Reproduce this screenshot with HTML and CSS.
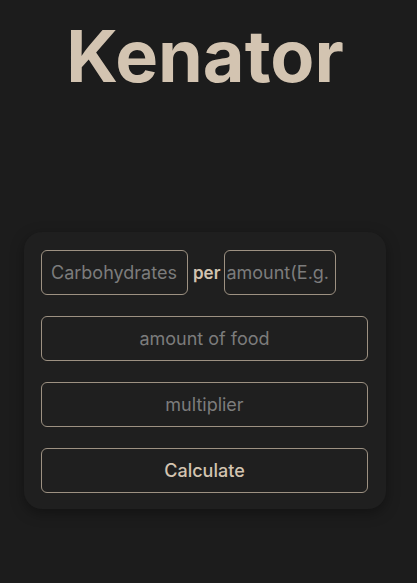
FILE: index.html
```html
<!DOCTYPE html>
<html>
<head>
<meta charset="utf-8">
<link rel="stylesheet" href="styles.css">
</head>
<body>
<main class="page">
  <h1 class="title">Kenator</h1>
  <section class="card">
    <div class="row">
      <input class="field field-carb" type="text" placeholder="Carbohydrates">
      <span class="per">per</span>
      <input class="field field-amount" type="text" placeholder="amount(E.g. 100g)">
    </div>
    <input class="field field-wide" type="text" placeholder="amount of food">
    <input class="field field-wide" type="text" placeholder="multiplier">
    <button class="btn">Calculate</button>
  </section>
</main>
</body>
</html>
```
FILE: styles.css
```css
html, body {
  margin: 0;
  padding: 0;
  background: #1c1c1c;
  height: 100%;
}
.page {
  display: flex;
  flex-direction: column;
  align-items: center;
  padding: 0 31px 0 24px;
  font-family: Inter, "Noto Sans", sans-serif;
}
.title {
  margin: 12px 0 0 0;
  font-size: 72px;
  font-weight: 700;
  line-height: 88px;
  color: #d3c4b1;
  letter-spacing: 0;
}
.card {
  margin-top: 132px;
  width: 362px;
  box-sizing: border-box;
  padding: 18px 18px 16px 17px;
  background: #1f1f1f;
  border-radius: 18px;
  box-shadow: 0 4px 14px rgba(0, 0, 0, 0.35);
  display: flex;
  flex-direction: column;
  gap: 21px;
}
.row {
  display: flex;
  align-items: center;
  gap: 0;
}
.field {
  box-sizing: border-box;
  height: 45px;
  border: 1px solid #9d9182;
  border-radius: 6px;
  background: #1f1f1f;
  color: #d3c4b1;
  font-family: Inter, "Noto Sans", sans-serif;
  font-size: 18px;
  padding: 0 9px;
  outline: none;
}
.field::placeholder {
  color: #7c7c7c;
}
.field-carb {
  width: 147px;
}
.field-amount {
  width: 112px;
  padding: 0 1px;
}
.per {
  color: #d3c4b1;
  font-size: 17px;
  font-weight: 600;
  margin: 0 4px 0 5px;
}
.field-wide {
  width: 327px;
  text-align: center;
}
.btn {
  box-sizing: border-box;
  width: 327px;
  height: 45px;
  border: 1px solid #9d9182;
  border-radius: 6px;
  background: #1f1f1f;
  color: #d3c4b1;
  font-family: Inter, "Noto Sans", sans-serif;
  font-size: 18px;
  font-weight: 500;
}
```
